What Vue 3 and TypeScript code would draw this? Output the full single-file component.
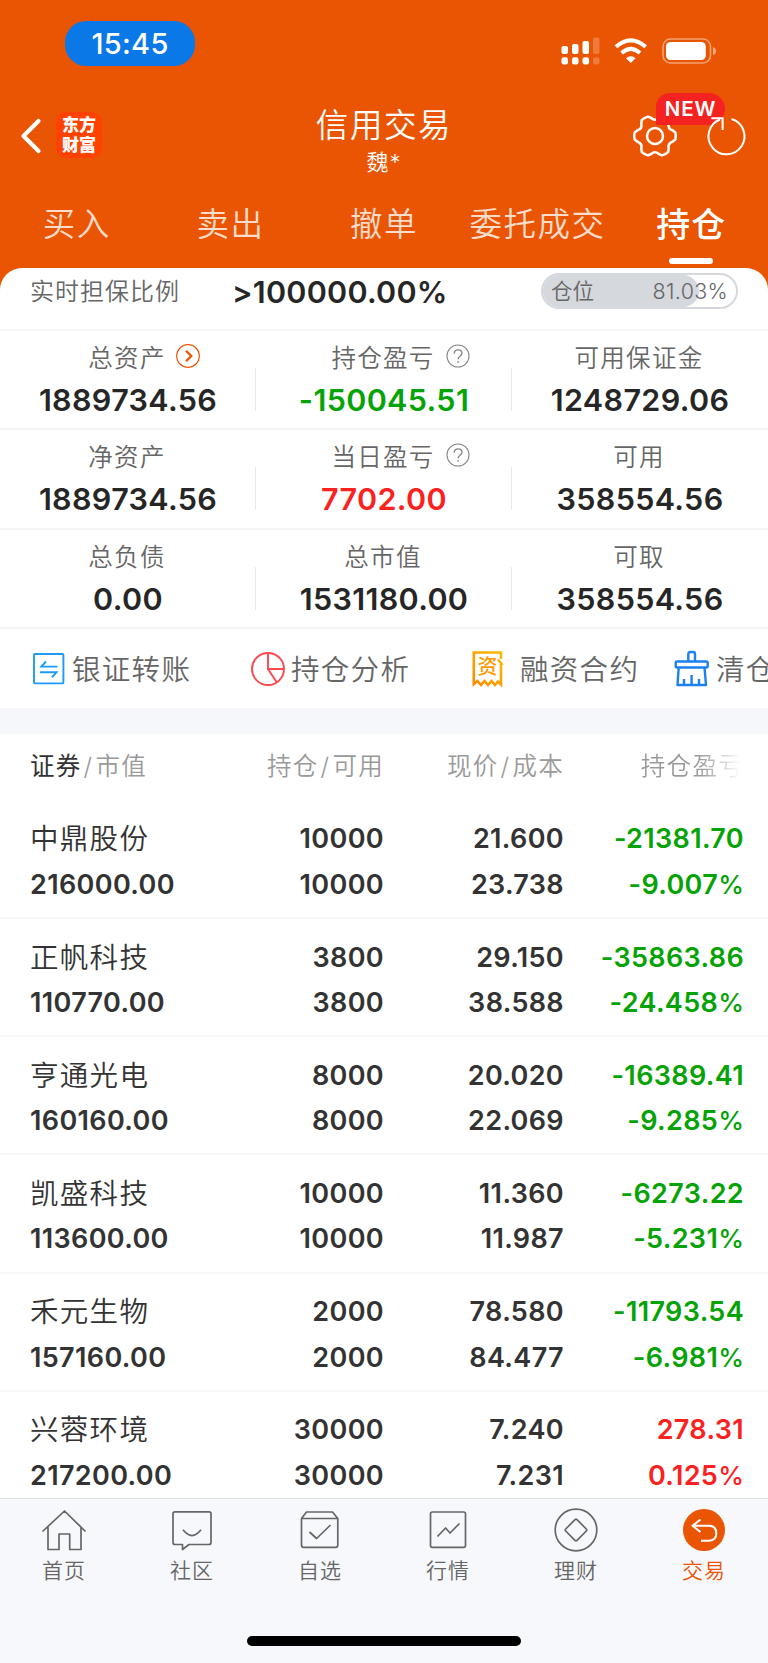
<script setup lang="ts">
interface Metric { label: string; value: string; tone?: 'up' | 'down'; mark?: 'go' | 'help' }
interface Holding { name: string; value: string; held: string; usable: string; price: string; cost: string; profit: string; rate: string; up?: boolean }

const tabs: string[] = ['买入', '卖出', '撤单', '委托成交', '持仓']
const metrics: Metric[][] = [
  [
    { label: '总资产', value: '1889734.56', mark: 'go' },
    { label: '持仓盈亏', value: '-150045.51', tone: 'down', mark: 'help' },
    { label: '可用保证金', value: '1248729.06' },
  ],
  [
    { label: '净资产', value: '1889734.56' },
    { label: '当日盈亏', value: '7702.00', tone: 'up', mark: 'help' },
    { label: '可用', value: '358554.56' },
  ],
  [
    { label: '总负债', value: '0.00' },
    { label: '总市值', value: '1531180.00' },
    { label: '可取', value: '358554.56' },
  ],
]
const holdings: Holding[] = [
  { name: '中鼎股份', value: '216000.00', held: '10000', usable: '10000', price: '21.600', cost: '23.738', profit: '-21381.70', rate: '-9.007%' },
  { name: '正帆科技', value: '110770.00', held: '3800', usable: '3800', price: '29.150', cost: '38.588', profit: '-35863.86', rate: '-24.458%' },
  { name: '亨通光电', value: '160160.00', held: '8000', usable: '8000', price: '20.020', cost: '22.069', profit: '-16389.41', rate: '-9.285%' },
  { name: '凯盛科技', value: '113600.00', held: '10000', usable: '10000', price: '11.360', cost: '11.987', profit: '-6273.22', rate: '-5.231%' },
  { name: '禾元生物', value: '157160.00', held: '2000', usable: '2000', price: '78.580', cost: '84.477', profit: '-11793.54', rate: '-6.981%' },
  { name: '兴蓉环境', value: '217200.00', held: '30000', usable: '30000', price: '7.240', cost: '7.231', profit: '278.31', rate: '0.125%', up: true },
]
const position = 81.03

// Six-tooth gear outline: flat teeth joined by concave curves
function gearPath(c: number, outer: number, dip: number): string {
  const at = (deg: number, r: number): string => {
    const a = (deg * Math.PI) / 180
    return `${(c + r * Math.cos(a)).toFixed(2)} ${(c + r * Math.sin(a)).toFixed(2)}`
  }
  let d = `M${at(-10, outer)}`
  for (let k = 0; k < 6; k++) {
    const base = k * 60
    d += `Q${at(base, outer + 0.8)} ${at(base + 10, outer)}L${at(base + 18, outer - 2.2)}Q${at(base + 30, dip)} ${at(base + 42, outer - 2.2)}L${at(base + 50, outer)}`
  }
  return d + 'Z'
}
const gear = gearPath(23, 20.6, 14.6)
</script>

<template>
  <div class="page">
    <header class="top">
      <div class="status">
        <div class="clock">15:45</div>
        <svg class="signals" width="160" height="32" viewBox="0 0 160 32">
          <g fill="#fff">
            <rect x="1.5" y="11" width="6.5" height="8" rx="2" /><rect x="12" y="9" width="6.5" height="10" rx="2" /><rect x="22.500" y="6" width="6.5" height="13" rx="2" />
            <rect x="33" y="2.5" width="6.5" height="16.5" rx="2" opacity=".22" />
            <rect x="1.5" y="22.3" width="6.5" height="7.2" rx="2.2" /><rect x="12" y="22.3" width="6.5" height="7.2" rx="2.2" /><rect x="22.5" y="22.3" width="6.5" height="7.2" rx="2.2" />
            <rect x="33" y="22.3" width="6.5" height="7.2" rx="2.2" opacity=".22" />
            <path d="M70.800 28 L66 23.200 Q70.800 19.400 75.600 23.200 Z" />
          </g>
          <g fill="none" stroke="#fff" stroke-width="4">
            <path d="M56 11.800 Q70.800 -1.200 85.600 11.800" />
            <path d="M61.600 17.900 Q70.800 9.700 80 17.900" />
          </g>
          <rect x="103" y="4" width="47.500" height="24" rx="7.500" fill="none" stroke="#fff" stroke-width="1.600" opacity=".45" />
          <rect x="106" y="7" width="39.800" height="18" rx="4.500" fill="#fff" />
          <path d="M153 12 Q156 13 156 16 Q156 19 153 20 Z" fill="#fff" opacity=".5" />
        </svg>
      </div>
      <div class="nav">
        <svg class="back" width="24" height="38" viewBox="0 0 24 38"><path d="M19.500 4 L4.500 19 L19.500 34" fill="none" stroke="#fff" stroke-width="4.200" stroke-linecap="round" stroke-linejoin="round" /></svg>
        <div class="logo"><span>东方</span><span>财富</span></div>
        <div class="title"><h1>信用交易</h1><p>魏*</p></div>
        <div class="tools">
          <svg class="gear" width="46" height="46" viewBox="0 0 46 46"><g fill="none" stroke="#fff" stroke-width="2.500" stroke-linejoin="round"><path :d="gear" /><circle cx="23" cy="23" r="8" /></g></svg>
          <span class="new">NEW</span>
          <svg class="refresh" width="44" height="44" viewBox="0 0 44 44"><g fill="none" stroke="#fff" stroke-width="2"><path d="M26.500 5 A18 18 0 1 1 15 5.500" /><path d="M6.300 4.300 H17.600 V16" /></g></svg>
        </div>
      </div>
      <nav class="tabs">
        <span v-for="(t, i) in tabs" :key="t" :class="{ active: i === 4 }">{{ t }}</span>
      </nav>
    </header>

    <main class="card">
      <section class="ratio">
        <span class="ratio-label">实时担保比例</span>
        <strong class="ratio-value">&gt;100000.00%</strong>
        <div class="pill">
          <div class="fill" :style="{ width: position + '%' }"></div>
          <span>仓位</span><span class="pct">{{ position }}%</span>
        </div>
      </section>

      <section v-for="(row, r) in metrics" :key="r" class="metrics">
        <div v-for="m in row" :key="m.label" class="metric">
          <div class="label">
            <span>{{ m.label }}</span>
            <svg v-if="m.mark === 'go'" class="mark go" width="26" height="26" viewBox="0 0 26 26"><g fill="none" stroke="#ea5504"><circle cx="13" cy="13" r="11.300" stroke-width="1.200" /><path d="M11 7.800 L16.300 13 L11 18.200" stroke-width="2.300" /></g></svg>
            <svg v-if="m.mark === 'help'" class="mark" width="26" height="26" viewBox="0 0 26 26"><circle cx="13" cy="13" r="11" fill="none" stroke="#888" stroke-width="1.100" /><path d="M9.200 10.600 Q9.400 6.900 13.100 6.900 Q16.900 6.900 16.900 10.200 Q16.900 11.900 15 13.300 Q13.100 14.700 13.100 16.200 M13.100 18.100 V19.800" fill="none" stroke="#888" stroke-width="1.400" /></svg>
          </div>
          <div class="value" :class="m.tone">{{ m.value }}</div>
        </div>
      </section>

      <section class="actions">
        <div class="action transfer">
          <svg width="32" height="32" viewBox="0 0 32 32"><g fill="none" stroke="#1c9bf7" stroke-width="1.900"><rect x="1" y="1" width="29.400" height="29.400" rx="1" /><path d="M13 8.500 L8.300 13.600 H24.500 M7 19.300 H23.500 L19 24.400" /></g></svg>
          <span>银证转账</span>
        </div>
        <div class="action analysis">
          <svg width="36" height="36" viewBox="0 0 36 36"><g fill="none" stroke="#fb4850" stroke-width="1.900"><circle cx="18" cy="18" r="16" /><path d="M18 2 V18 H34 M18 18 L26.500 31" /></g></svg>
          <span>持仓分析</span>
        </div>
        <div class="action margin">
          <svg width="32" height="38" viewBox="0 0 32 38">
            <defs><linearGradient id="gold" x1="0" y1="1" x2="1" y2="0"><stop offset="0" stop-color="#fb8a00" /><stop offset="1" stop-color="#fbbd08" /></linearGradient></defs>
            <path d="M29 9 V2.500 H1.800 V34 L5.500 31 L9 35 L12.500 31 L16 35 L19.500 31 L23 35 L26 31.500 L29 34.500 V14 M26 9.500 L30.500 15" fill="none" stroke="url(#gold)" stroke-width="2.600" />
            <text x="15.500" y="24" text-anchor="middle">资</text>
          </svg>
          <span>融资合约</span>
        </div>
        <div class="action clear">
          <svg width="36" height="38" viewBox="0 0 36 38"><g fill="none" stroke="#1c80f0" stroke-width="2.400" stroke-linejoin="round"><path d="M14.300 12 V4 Q14.300 2 16.300 2 H19 Q21 2 21 4 V12" /><rect x="1.700" y="11.500" width="32" height="6" rx="1.500" /><path d="M4.700 17.500 L3.500 35 H32 L30.500 17.500 M10 35 V29 M17.600 35 V25 M25 35 V29" /></g></svg>
          <span>清仓</span>
        </div>
      </section>

      <div class="gap"></div>

      <div class="grid head">
        <span><b>证券</b><i>/</i>市值</span><span>持仓<i>/</i>可用</span><span>现价<i>/</i>成本</span><span class="fade">持仓盈亏</span>
      </div>
      <div class="list">
        <div v-for="h in holdings" :key="h.name" class="grid row">
          <span class="name">{{ h.name }}</span><span>{{ h.held }}</span><span>{{ h.price }}</span><span :class="h.up ? 'up' : 'down'">{{ h.profit }}</span>
          <span>{{ h.value }}</span><span>{{ h.usable }}</span><span>{{ h.cost }}</span><span :class="h.up ? 'up' : 'down'">{{ h.rate.slice(0, -1) }}<em>%</em></span>
        </div>
      </div>
    </main>

    <footer class="bar">
      <div class="items">
        <div class="item">
          <svg width="48" height="48" viewBox="0 0 48 48"><path d="M2.500 25.500 L24.500 5 L45.500 25.500 M8 21 V43.500 H19 V28 H29.700 V43.500 H41 V21" /></svg><span>首页</span>
        </div>
        <div class="item">
          <svg width="48" height="48" viewBox="0 0 48 48"><path d="M7 5.800 H41 Q43 5.800 43 7.800 V36.500 Q43 38.500 41 38.500 H21 L14.500 43.500 V38.500 H7 Q5 38.500 5 36.500 V7.800 Q5 5.800 7 5.800 Z M15 23.800 Q24 35.300 33 23.800" /></svg><span>社区</span>
        </div>
        <div class="item">
          <svg width="48" height="48" viewBox="0 0 48 48"><path d="M5.500 12.500 L10.500 6 H36.500 L41.800 12.500 V39 Q41.800 41.300 39.800 41.300 H7.500 Q5.500 41.300 5.500 39 V12.500 H41.800 M13.500 26 L20.600 32.500 L34.500 19" /></svg><span>自选</span>
        </div>
        <div class="item">
          <svg width="48" height="48" viewBox="0 0 48 48"><rect x="6.500" y="6" width="35" height="35.300" rx="1.800" /><path d="M13.500 30.500 L21.600 22 L26 27 L35.500 17.500" /></svg><span>行情</span>
        </div>
        <div class="item">
          <svg width="48" height="48" viewBox="0 0 48 48"><circle cx="24" cy="24" r="20.800" /><path d="M23 13.700 Q24 12.700 25 13.700 L34.300 23 Q35.300 24 34.300 25 L25 34.300 Q24 35.300 23 34.300 L13.700 25 Q12.700 24 13.700 23 Z" /></svg><span>理财</span>
        </div>
        <div class="item current">
          <svg width="48" height="48" viewBox="0 0 48 48"><circle cx="24" cy="24" r="21" /><path d="M20.500 13.500 L12.500 19.800 L20.500 26 M12.500 19.800 H29 Q36.300 20 36.300 27.300 Q36.300 34.500 29 34.800 H21" /></svg><span>交易</span>
        </div>
      </div>
      <div class="home"></div>
    </footer>
  </div>
</template>

<style>
body { margin: 0; background: #fff; }
</style>

<style scoped>
* { box-sizing: border-box; }
.page { width: 768px; height: 1663px; display: flex; flex-direction: column; overflow: hidden; background: #ea5504; color: #333; font-family: Inter, "Noto Sans CJK SC", sans-serif; font-weight: 350; white-space: nowrap; }
.top { height: 268px; flex: none; color: #fff; }
.status { height: 92px; display: flex; justify-content: space-between; padding: 21px 48px 0 65px; }
.clock { width: 130px; height: 45px; border-radius: 21px; background: #0b78e7; font: 500 29px/46px Inter, sans-serif; text-align: center; letter-spacing: .3px; }
.signals { margin-top: 14px; }
.nav { height: 88px; display: flex; position: relative; }
.back { margin: 25px 0 0 19px; }
.logo { width: 46px; height: 46px; margin: 20px 0 0 13px; border-radius: 10px; background: #ff4200; display: flex; flex-direction: column; padding-top: 4px; align-items: center; font-weight: 900; font-size: 17px; line-height: 19.500px; }
.title { position: absolute; left: 0; right: 0; top: 10px; text-align: center; }
.title h1 { margin: 0; font-size: 32.500px; line-height: 48px; font-weight: 350; letter-spacing: 1.600px; }
.title p { margin: -1px 0 0; font-size: 22px; line-height: 26px; letter-spacing: 1px; }
.tools { margin-left: auto; display: flex; position: relative; padding: 21px 19px 0 0; gap: 27px; }
.refresh { position: relative; z-index: 2; margin-top: 1px; }
.new { position: absolute; left: 24px; top: 1px; width: 69px; height: 32px; border-radius: 14px 16px 16px 0; background: #f52222; font: 600 20.500px/32px Inter, sans-serif; text-align: center; letter-spacing: .9px; }
.tabs { height: 88px; display: grid; grid-template-columns: repeat(5, 1fr); text-align: center; font-size: 32.500px; line-height: 48px; letter-spacing: 1.500px; padding-top: 21px; color: #fedccb; }
.tabs .active { color: #fff; font-weight: 500; font-size: 34px; letter-spacing: 1px; display: flex; flex-direction: column; align-items: center; }
.tabs .active::after { content: ""; width: 44px; height: 6px; border-radius: 3px; background: #fff; margin-top: 9px; }
.card { height: 1230px; flex: none; background: #fff; border-radius: 22px 22px 0 0; overflow: hidden; }
.ratio { height: 63px; border-bottom: 2px solid #f7f7f7; display: flex; align-items: flex-start; padding-left: 30px; color: #666; }
.ratio-label { font-size: 24px; line-height: 36px; letter-spacing: 1px; width: 202px; margin-top: 6px; }
.ratio-value { font-weight: 600; font-size: 30.500px; line-height: 40px; letter-spacing: .25px; color: #262626; margin-top: 4px; }
.pill { position: relative; width: 197px; height: 36px; margin: 5px 30px 0 auto; border: 2px solid #d5d8dd; border-radius: 18px; display: flex; justify-content: space-between; padding: 0 8px; font-size: 21.500px; line-height: 32px; overflow: hidden; }
.fill { position: absolute; left: 0; top: 0; bottom: 0; background: #d5d8dd; border-radius: 0 16px 16px 0; }
.pill span { position: relative; }
.pct { letter-spacing: .3px; }
.metrics { height: 99.300px; display: grid; grid-template-columns: repeat(3, 1fr); border-bottom: 2px solid #f4f4f4; }
.metric { text-align: center; position: relative; }
.metric + .metric::before { content: ""; position: absolute; left: -1px; top: 37px; width: 1px; height: 43px; background: #e9e9e9; }
.label { height: 45px; padding-top: 9px; font-size: 24.500px; line-height: 36px; letter-spacing: 1.300px; color: #666; display: flex; justify-content: center; position: relative; left: -1px; }
.mark { position: absolute; top: 12px; left: 190px; }
.mark.go { left: 176px; }
.value { font-weight: 600; font-size: 30.500px; line-height: 48px; letter-spacing: .35px; color: #262626; }
.value.up, .up { color: #fa2121; }
.value.down, .down { color: #05a305; }
.actions { height: 79px; display: flex; align-items: center; overflow: hidden; font-size: 28.500px; letter-spacing: 1.300px; line-height: 40px; color: #666; padding: 1px 0 0 33px; }
.action { display: flex; align-items: center; flex: none; }
.action > span { position: relative; top: 1px; }
.transfer { width: 217px; gap: 7px; }
.analysis { width: 222px; gap: 5px; }
.margin { width: 202px; gap: 16px; }
.margin text { font: 500 20px "Noto Sans CJK SC", sans-serif; fill: #fb9b04; letter-spacing: 0; }
.clear { gap: 6px; }
.gap { height: 26px; background: #f6f7fa; }
.grid { display: grid; grid-template-columns: 210px 144px 180px 180px; padding: 0 24px 0 30px; }
.grid > span { text-align: right; }
.grid > span:nth-child(4n + 1) { text-align: left; }
.head { height: 67px; padding-top: 13px; font-size: 24.500px; line-height: 38px; letter-spacing: 1.300px; color: #999; }
.head b { font-weight: 400; color: #333; }
.head i { font-style: normal; margin: 0 2px; }
.fade { background: linear-gradient(90deg, #999 75%, #fff 98%); background-clip: text; color: transparent; }
.row { height: 118.200px; padding-top: 15.500px; grid-template-rows: 45.500px 46px; border-bottom: 2px solid #f8f8f8; font-weight: 600; font-size: 27px; line-height: 46px; letter-spacing: .35px; }
.row .name { font-weight: 350; font-size: 28.500px; letter-spacing: 1.300px; }
.row em { font-style: normal; font-weight: 500; font-size: 26px; letter-spacing: 0; }
.bar { flex: 1; background: #f7f8fb; border-top: 1px solid #dedfe3; }
.items { display: grid; grid-template-columns: repeat(6, 1fr); padding-top: 7px; }
.item { display: flex; flex-direction: column; align-items: center; color: #666; font-size: 21px; line-height: 34px; letter-spacing: 1px; }
.item svg { fill: none; stroke: #666; stroke-width: 1.700; stroke-linejoin: round; }
.current { color: #ea5504; }
.item.current svg { stroke: #fff; stroke-width: 2; }
.current circle { fill: #ea5504; stroke: none; }
.home { width: 274px; height: 10px; border-radius: 5px; background: #000; margin: 48px auto 0; }
</style>
